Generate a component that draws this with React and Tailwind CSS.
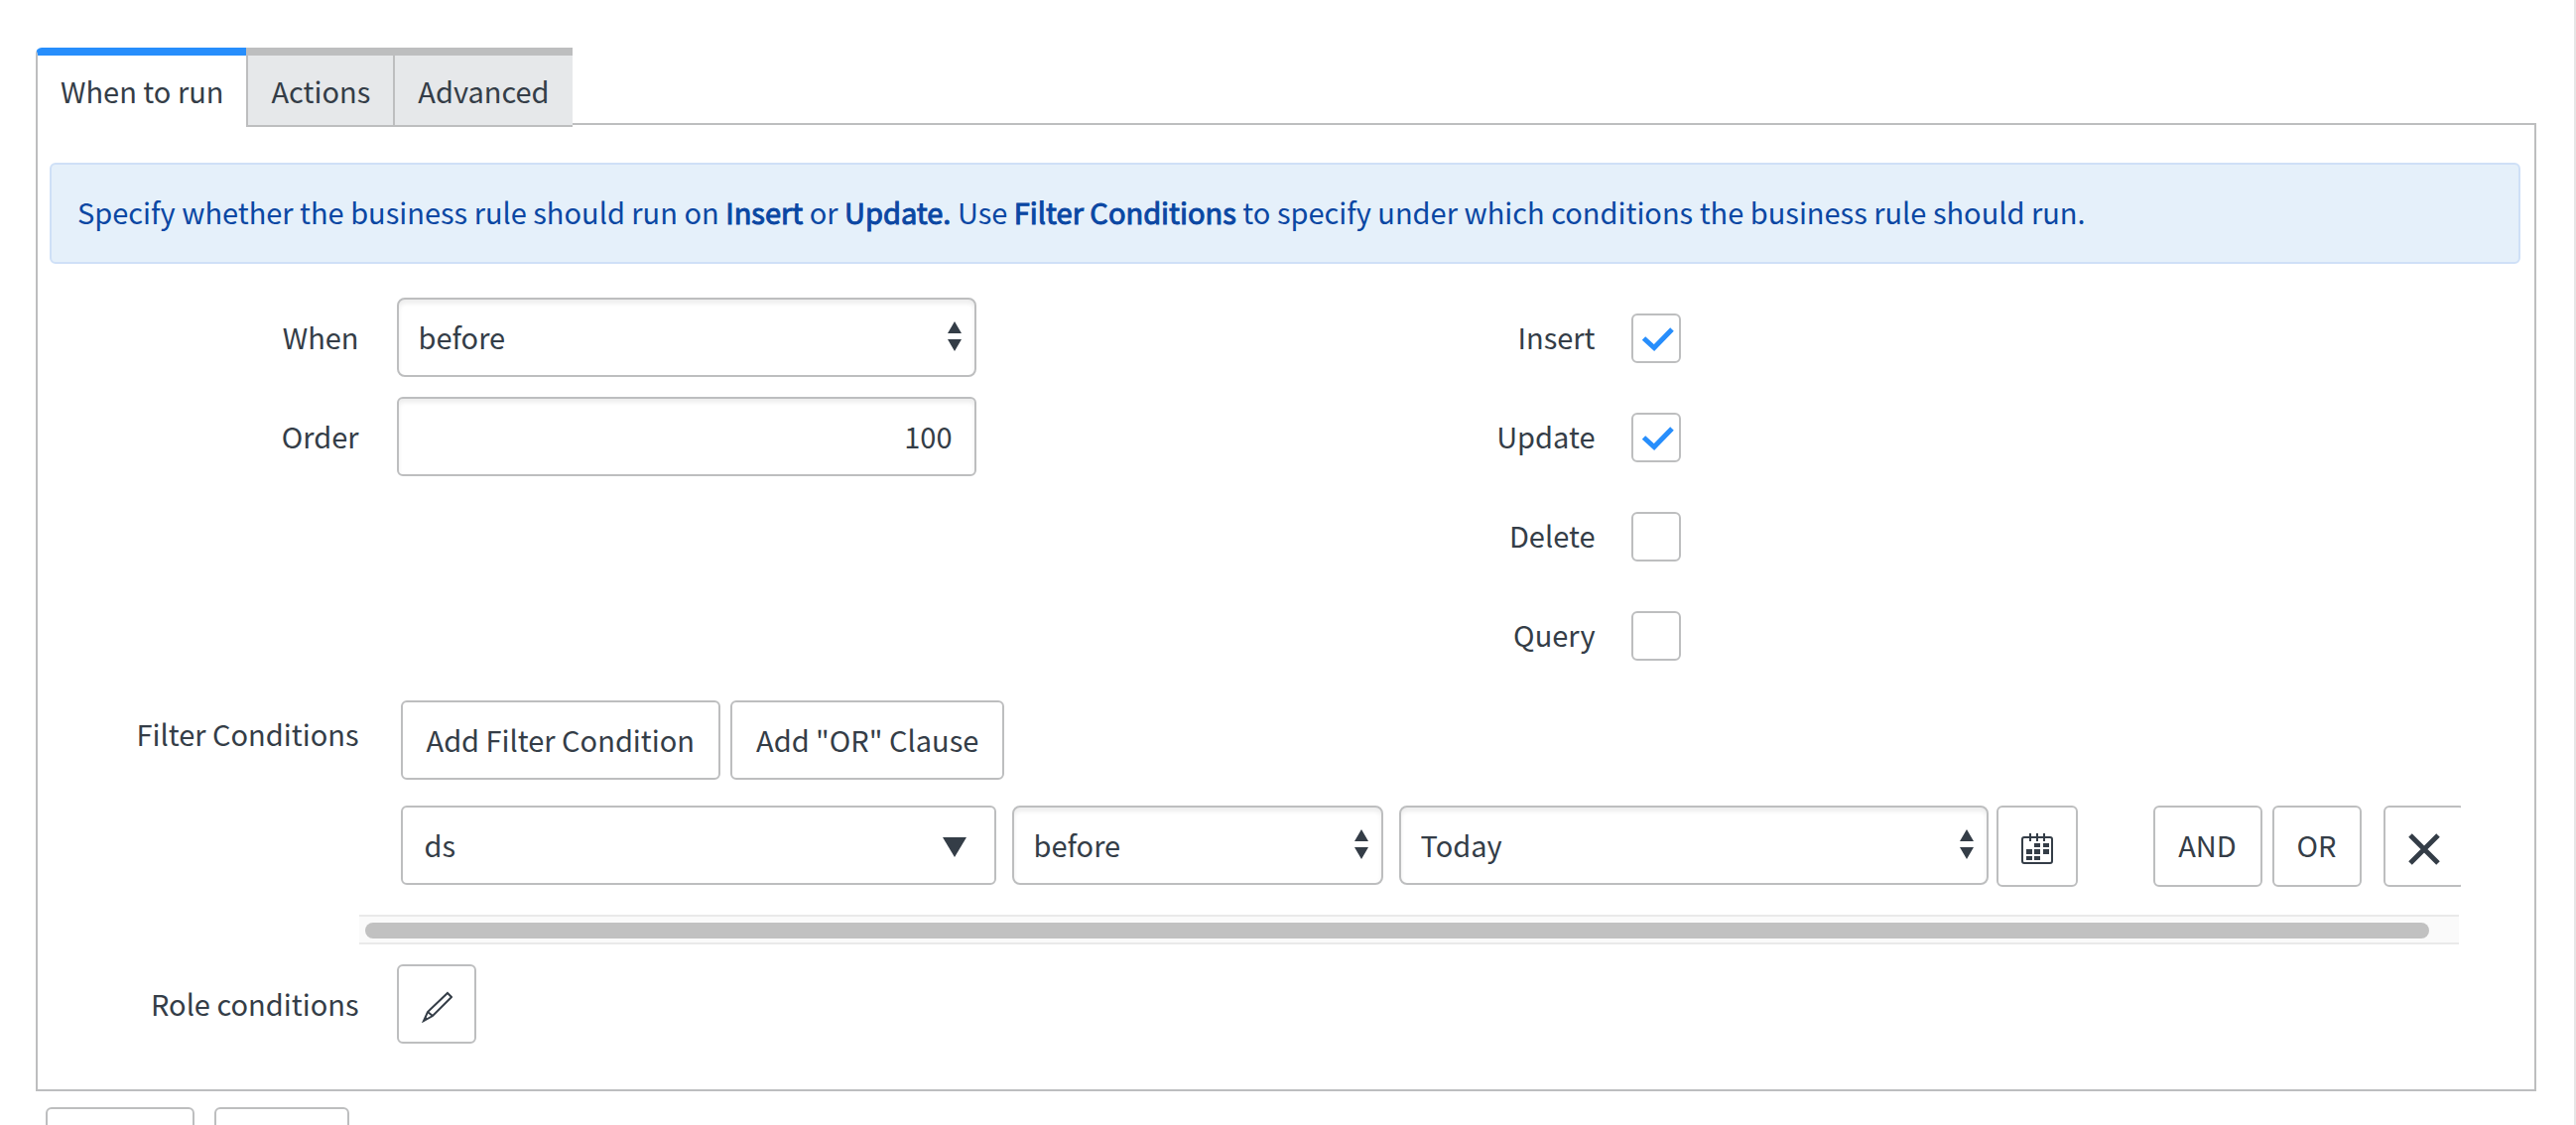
import { useState } from "react";
import clsx from "clsx";

const tabs = ["When to run", "Actions", "Advanced"];

const buttonClass =
  "flex shrink-0 items-center justify-center rounded-md border-2 border-[#bdbebf] bg-white";

function SortArrows() {
  return (
    <svg
      className="pointer-events-none absolute top-6 right-3.5 h-[30px] w-4 fill-[#343d47]"
      viewBox="0 0 16 30"
      aria-hidden="true"
    >
      <path d="M8 0l7 12H1zM8 30l7-12H1z" />
    </svg>
  );
}

function SelectBox({ id, label, options, className }) {
  return (
    <div className={clsx("relative shrink-0", className)}>
      <select
        id={id}
        aria-label={label}
        className="h-20 w-full appearance-none rounded-lg border-2 border-[#bdbebf] bg-white pb-0.5 pl-5 shadow-[inset_0_4px_4px_rgba(0,0,0,0.07)]"
      >
        {options.map((option) => (
          <option key={option}>{option}</option>
        ))}
      </select>
      <SortArrows />
    </div>
  );
}

function CheckRow({ id, label, defaultChecked }) {
  return (
    <div className="flex h-20 items-center">
      <label htmlFor={id} className="w-1/4 pb-0.5 text-right">
        {label}
      </label>
      <span className="relative mt-0.5 ml-9 h-[50px] w-[50px]">
        <input
          id={id}
          type="checkbox"
          defaultChecked={defaultChecked}
          className="peer block h-full w-full appearance-none rounded-md border-2 border-[#bdbebf] bg-white"
        />
        <svg
          className="pointer-events-none absolute inset-0 hidden peer-checked:block"
          viewBox="0 0 50 50"
          fill="none"
          aria-hidden="true"
        >
          <path d="M12.500 25l10.500 9.500L41 16" stroke="#278efc" strokeWidth="5" />
        </svg>
      </span>
    </div>
  );
}

function Strong({ children }) {
  return <strong className="font-normal [-webkit-text-stroke:1px]">{children}</strong>;
}

function CalendarIcon() {
  return (
    <svg className="mt-1.5 h-8 w-8" viewBox="0 0 32 32" fill="none" aria-hidden="true">
      <rect x="1" y="4" width="30" height="26" rx="2" stroke="#343d47" strokeWidth="2" />
      <path d="M9 0v8M16 0v8M23 0v8" stroke="#343d47" strokeWidth="2" />
      <path
        d="M13 10h6v4h-6zM22 10h6v4h-6zM5 16h6v5H5zM13 16h6v5h-6zM22 16h6v5h-6zM5 23h6v4H5zM13 23h6v4h-6z"
        fill="#343d47"
      />
    </svg>
  );
}

function PencilIcon() {
  return (
    <svg
      className="mt-1.5 h-8 w-8"
      viewBox="0 0 32 32"
      fill="none"
      stroke="#343d47"
      strokeWidth="2"
      aria-hidden="true"
    >
      <path d="M27 2l4 4L12 25l-9 5 4-9z" />
      <path d="M7 21l5 4" />
      <path d="M2 31l3-5 2 2z" fill="#343d47" stroke="none" />
    </svg>
  );
}

export default function App() {
  const [activeTab, setActiveTab] = useState(tabs[0]);

  return (
    <div className="h-screen overflow-hidden border-r-2 border-[#e6e6e6] bg-white pt-12 pr-[38px] pl-9 font-['Noto_Sans_CJK_JP',sans-serif] text-[29px] leading-10 text-[#343d47]">
      <nav className="relative z-10 -mb-1 flex w-fit" role="tablist">
        {tabs.map((tab) => (
          <button
            key={tab}
            type="button"
            role="tab"
            aria-selected={tab === activeTab}
            onClick={() => setActiveTab(tab)}
            className={clsx(
              "h-20 border-t-8 border-l-2 px-[23px] first:rounded-tl-md",
              tab === activeTab
                ? "border-t-[#278efc] border-l-[#bdbebf] bg-white pb-0.5"
                : "border-b-2 border-[#bdbebf] bg-[#e6e8ea]"
            )}
          >
            {tab}
          </button>
        ))}
      </nav>

      <main className="border-2 border-[#bdbebf] px-3 pt-[38px] pb-[46px]">
        <p className="mr-0.5 rounded-md border-2 border-[#cfe0f7] bg-[#e5f0fa] px-[26px] pt-[27px] pb-[31px] text-[#0a47a3]">
          Specify whether the business rule should run on <Strong>Insert</Strong> or{" "}
          <Strong>Update.</Strong> Use <Strong>Filter Conditions</Strong> to specify under which
          conditions the business rule should run.
        </p>

        <form>
          <div className="mt-[34px] grid grid-cols-2">
            <div className="flex flex-col gap-5">
              <div className="flex items-center">
                <label htmlFor="when" className="w-1/4 pb-0.5 text-right">
                  When
                </label>
                <SelectBox
                  id="when"
                  options={["before", "after", "async", "display"]}
                  className="ml-[38px] w-[584px]"
                />
              </div>
              <div className="flex items-center">
                <label htmlFor="order" className="w-1/4 pb-0.5 text-right">
                  Order
                </label>
                <input
                  id="order"
                  type="text"
                  defaultValue="100"
                  className="ml-[38px] h-20 w-[584px] rounded-md border-2 border-[#bdbebf] px-[22px] pb-0.5 text-right shadow-[inset_0_4px_4px_rgba(0,0,0,0.07)]"
                />
              </div>
            </div>
            <div className="flex flex-col gap-5">
              <CheckRow id="insert" label="Insert" defaultChecked />
              <CheckRow id="update" label="Update" defaultChecked />
              <CheckRow id="delete" label="Delete" />
              <CheckRow id="query" label="Query" />
            </div>
          </div>

          <div className="mt-5 flex">
            <div className="w-1/8 pt-[19px] text-right">Filter Conditions</div>
            <div className="mr-[62px] min-w-0 flex-1 pt-1.5">
              <div className="overflow-hidden pl-[42px]">
                <div className="flex gap-2.5">
                  <button type="button" className={clsx(buttonClass, "h-20 px-6 pb-0.5")}>
                    Add Filter Condition
                  </button>
                  <button type="button" className={clsx(buttonClass, "h-20 px-6 pb-0.5")}>
                    Add "OR" Clause
                  </button>
                </div>

                <div className="mt-[26px] flex">
                  <button
                    type="button"
                    className="flex h-20 w-[600px] shrink-0 items-center justify-between rounded-md border-2 border-[#bdbebf] pr-7 pb-0.5 pl-[22px]"
                  >
                    ds
                    <svg
                      className="mt-1.5 h-5 w-6 fill-[#343d47]"
                      viewBox="0 0 24 20"
                      aria-hidden="true"
                    >
                      <path d="M0 0h24L12 20z" />
                    </svg>
                  </button>
                  <SelectBox
                    label="Operator"
                    options={["before", "after", "on"]}
                    className="ml-4 w-[374px]"
                  />
                  <SelectBox
                    label="Value"
                    options={["Today", "Yesterday", "Tomorrow"]}
                    className="ml-4 w-[594px]"
                  />
                  <button
                    type="button"
                    aria-label="Choose date"
                    className={clsx(buttonClass, "ml-2 h-[82px] w-[82px]")}
                  >
                    <CalendarIcon />
                  </button>
                  <button
                    type="button"
                    className={clsx(buttonClass, "ml-[76px] h-[82px] w-[110px] pb-1")}
                  >
                    AND
                  </button>
                  <button
                    type="button"
                    className={clsx(buttonClass, "ml-2.5 h-[82px] w-[90px] pb-1")}
                  >
                    OR
                  </button>
                  <button
                    type="button"
                    aria-label="Remove condition"
                    className={clsx(buttonClass, "ml-[22px] h-[82px] w-[82px]")}
                  >
                    <svg className="mt-1.5 h-8 w-8" viewBox="0 0 32 32" aria-hidden="true">
                      <path d="M2 2l28 28M30 2L2 30" stroke="#343d47" strokeWidth="5" />
                    </svg>
                  </button>
                </div>
              </div>

              {/* horizontal scroll track */}
              <div className="mt-7 mr-0.5 h-[30px] border-y-2 border-[#e9e9e9] bg-[#fafafa] py-1.5 pr-[30px] pl-1.5">
                <div className="h-4 rounded-full bg-[#c1c1c1]" />
              </div>
            </div>
          </div>

          <div className="mt-5 flex items-center">
            <div className="w-1/8 pb-0.5 text-right">Role conditions</div>
            <button
              type="button"
              aria-label="Edit role conditions"
              className={clsx(buttonClass, "ml-[38px] h-20 w-20")}
            >
              <PencilIcon />
            </button>
          </div>
        </form>
      </main>

      <div className="mt-4 ml-2.5 flex gap-5">
        <button type="button" aria-label="Update rule" className={clsx(buttonClass, "h-20 w-[150px]")} />
        <button type="button" aria-label="Delete rule" className={clsx(buttonClass, "h-20 w-[136px]")} />
      </div>
    </div>
  );
}
